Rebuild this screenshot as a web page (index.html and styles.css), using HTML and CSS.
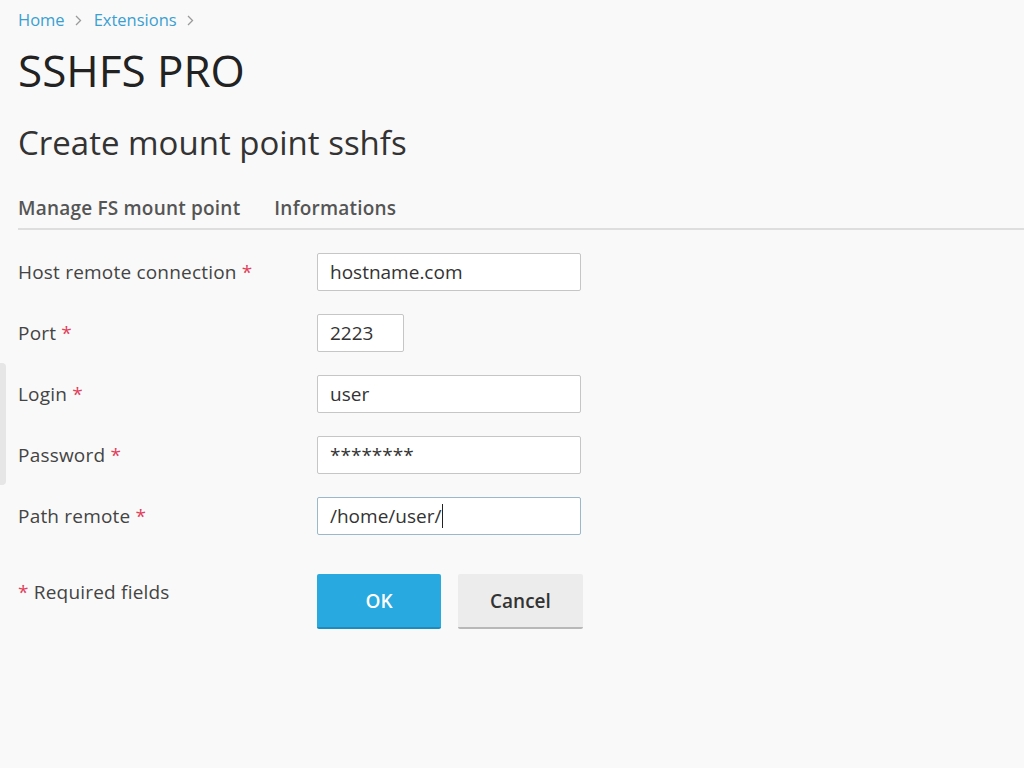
FILE: index.html
```html
<!DOCTYPE html>
<html>
<head>
<meta charset="utf-8">
<link rel="stylesheet" href="styles.css">
</head>
<body>
<div class="side-tab"></div>
<div class="page">
  <nav class="crumbs">
    <a class="crumb">Home</a>
    <svg class="sep" width="7" height="11" viewBox="0 0 7 11"><path d="M1 1l4.5 4.5L1 10" fill="none" stroke="#9a9a9a" stroke-width="1.3"/></svg>
    <a class="crumb">Extensions</a>
    <svg class="sep" width="7" height="11" viewBox="0 0 7 11"><path d="M1 1l4.5 4.5L1 10" fill="none" stroke="#9a9a9a" stroke-width="1.3"/></svg>
  </nav>
  <h1 class="title">SSHFS PRO</h1>
  <h2 class="subtitle">Create mount point sshfs</h2>
  <div class="tabs">
    <span class="tab">Manage FS mount point</span>
    <span class="tab">Informations</span>
  </div>
  <form class="form">
    <div class="row">
      <label class="label">Host remote connection <span class="req">*</span></label>
      <div class="field">hostname.com</div>
    </div>
    <div class="row">
      <label class="label">Port <span class="req">*</span></label>
      <div class="field short">2223</div>
    </div>
    <div class="row">
      <label class="label">Login <span class="req">*</span></label>
      <div class="field">user</div>
    </div>
    <div class="row">
      <label class="label">Password <span class="req">*</span></label>
      <div class="field pw">********</div>
    </div>
    <div class="row">
      <label class="label">Path remote <span class="req">*</span></label>
      <div class="field focus">/home/user/<span class="caret"></span></div>
    </div>
    <div class="actions">
      <div class="note"><span class="req">*</span> Required fields</div>
      <div class="buttons">
        <button type="button" class="btn primary">OK</button>
        <button type="button" class="btn">Cancel</button>
      </div>
    </div>
  </form>
</div>
</body>
</html>
```

FILE: styles.css
```css
html, body {
  margin: 0;
  padding: 0;
  background: #f9f9f9;
  font-family: "Open Sans", "Noto Sans", sans-serif;
  color: #333;
}
.side-tab {
  position: absolute;
  left: 0;
  top: 363px;
  width: 6px;
  height: 122px;
  background: #e6e6e6;
  border-radius: 0 4px 4px 0;
}
.page {
  padding: 9px 0 0 18px;
}
.crumbs {
  display: flex;
  align-items: center;
  font-size: 16.5px;
  line-height: 22px;
  height: 22px;
}
.crumb {
  color: #3a9fd2;
}
.sep {
  margin: 0 12px 0 10px;
}
.title {
  margin: 9px 0 0;
  font-size: 44px;
  font-weight: 400;
  line-height: 60px;
  color: #222;
}
.subtitle {
  margin: 21px 0 0;
  font-size: 33px;
  font-weight: 400;
  line-height: 44px;
  color: #333;
}
.tabs {
  margin-top: 30px;
  display: flex;
  gap: 34px;
  border-bottom: 2px solid #dedede;
  padding-bottom: 7px;
}
.tab {
  font-size: 19px;
  font-weight: 600;
  color: #555;
  line-height: 26px;
  letter-spacing: 0.2px;
}
.form {
  padding-top: 22px;
}
.row {
  display: flex;
  align-items: center;
  height: 40px;
  margin-bottom: 21px;
}
.label {
  width: 299px;
  font-size: 19px;
  color: #444;
  letter-spacing: 0.2px;
}
.req {
  color: #e2405a;
}
.field {
  box-sizing: border-box;
  width: 264px;
  height: 38px;
  border: 1px solid #c6c6c6;
  border-radius: 2px;
  background: #fff;
  padding: 0 12px;
  font-size: 19px;
  line-height: 36px;
  color: #333;
  display: flex;
  align-items: center;
}
.field.short {
  width: 87px;
}
.field.focus {
  border-color: #9ab7cc;
}
.caret {
  display: inline-block;
  width: 1px;
  height: 24px;
  background: #222;
  margin-left: 1px;
}
.actions {
  display: flex;
  align-items: flex-start;
  margin-top: 38px;
}
.note {
  width: 299px;
  font-size: 19px;
  color: #444;
  padding-top: 5px;
  letter-spacing: 0.2px;
}
.buttons {
  display: flex;
  gap: 17px;
}
.btn {
  box-sizing: border-box;
  height: 55px;
  min-width: 124px;
  padding: 0 32px;
  border: 0;
  border-radius: 2px;
  background: #ececec;
  border-bottom: 2px solid #b8b8b8;
  font-family: inherit;
  font-size: 19px;
  font-weight: 600;
  color: #333;
}
.btn.primary {
  background: #28a9df;
  border-bottom-color: #1d8bbb;
  color: #fff;
}
```
